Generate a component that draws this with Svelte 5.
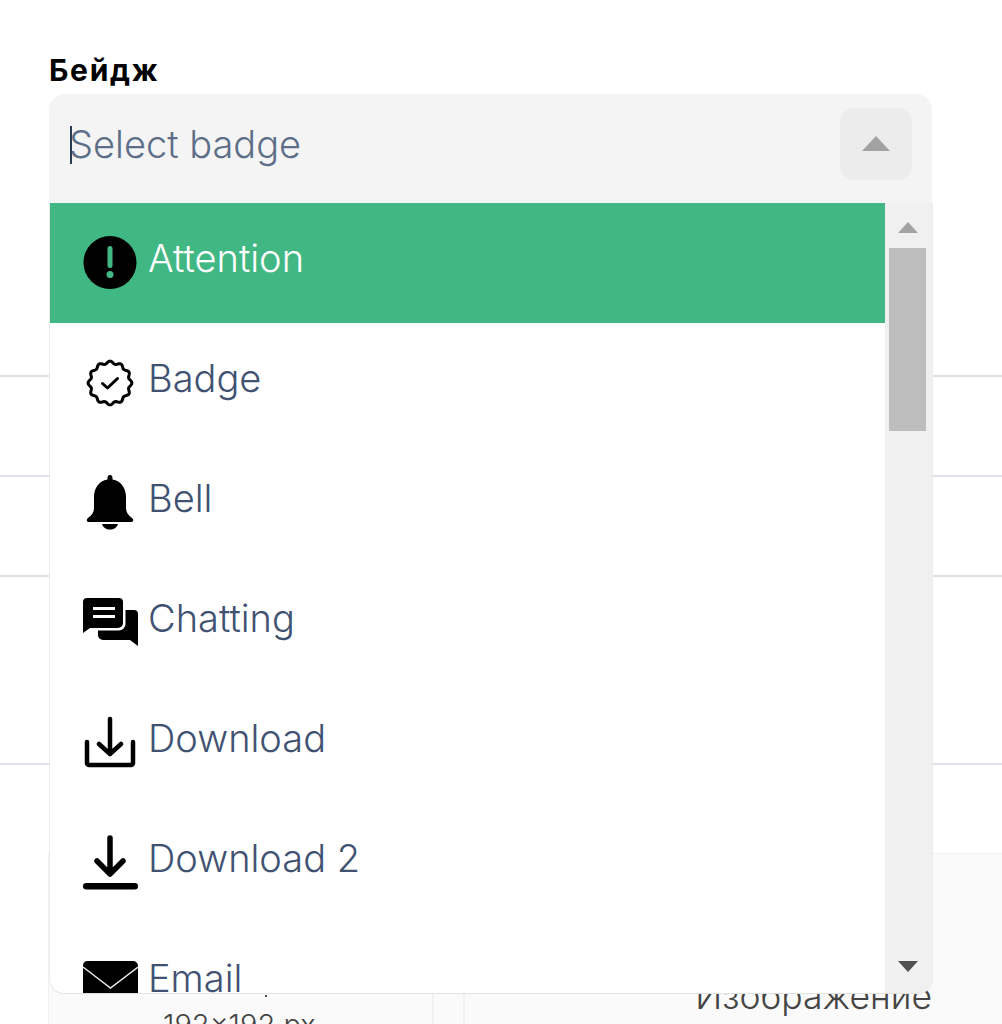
<script>
	const options = [
		{ name: 'Attention', icon: 'attention' },
		{ name: 'Badge', icon: 'badge' },
		{ name: 'Bell', icon: 'bell' },
		{ name: 'Chatting', icon: 'chatting' },
		{ name: 'Download', icon: 'download' },
		{ name: 'Download 2', icon: 'download2' },
		{ name: 'Email', icon: 'email' }
	];

	// wavy seal outline for the badge icon
	function sealPath() {
		let d = '';
		for (let i = 0; i < 144; i++) {
			const a = (i / 144) * Math.PI * 2;
			const r = 20.6 + 1.3 * Math.cos(a * 12);
			const x = (28 + r * Math.sin(a)).toFixed(2);
			const y = (28 - r * Math.cos(a)).toFixed(2);
			d += (i === 0 ? 'M' : 'L') + x + ' ' + y;
		}
		return d + 'Z';
	}
</script>

<div class="page">
	<div class="label">Бейдж</div>
	<div class="select">
		<div class="control">
			<span class="caret"></span>
			<span class="placeholder">Select badge</span>
			<span class="toggle"><span class="tri-up"></span></span>
		</div>
		<div class="menu">
			<div class="list">
				{#each options as opt, i}
					<div class="option" class:active={i === 0}>
						<span class="icon">
							<svg width="56" height="56" viewBox="0 0 56 56">
								{#if opt.icon === 'attention'}
									<circle cx="28" cy="27.500" r="26.500" fill="#000" />
									<rect x="25.500" y="11" width="5" height="22" rx="2.500" fill="#41b883" />
									<circle cx="28" cy="39.500" r="3.500" fill="#41b883" />
								{:else if opt.icon === 'badge'}
									<path d={sealPath()} fill="none" stroke="#000" stroke-width="3" stroke-linejoin="round" />
									<path d="M20.500 28.500l5 4.500 10-9.500" fill="none" stroke="#000" stroke-width="3" stroke-linecap="round" stroke-linejoin="round" />
								{:else if opt.icon === 'bell'}
									<path d="M28 0c1.500 0 2.500 1.200 2.500 3v1.500C39 6 44 13 44 22v11c0 4 2 7 6 10 2 1.500 1.500 4-1 4H7c-2.500 0-3-2.500-1-4 4-3 6-6 6-10V22c0-9 5-16 13.500-17.500V3c0-1.800 1-3 2.500-3z" fill="#000" />
									<path d="M20 49h16c-1 3.500-4 5.500-8 5.500s-7-2-8-5.500z" fill="#000" />
								{:else if opt.icon === 'chatting'}
									<path d="M5 3h32a4 4 0 0 1 4 4v21a5 5 0 0 1-5 5H8l-7 5V7a4 4 0 0 1 4-4z" fill="#000" />
									<path d="M43.500 15h8.500a4 4 0 0 1 4 4v32l-8-6H21a5 5 0 0 1-5-5v-4.500h21a6.500 6.500 0 0 0 6.500-6.500z" fill="#000" />
									<rect x="11" y="12" width="22" height="3" fill="#fff" />
									<rect x="11" y="20" width="22" height="3" fill="#fff" />
								{:else if opt.icon === 'download'}
									<path d="M5 27v21a2 2 0 0 0 2 2h42a2 2 0 0 0 2-2V27M28 4v35M17 29l11 10 11-10" fill="none" stroke="#000" stroke-width="4.500" stroke-linecap="round" stroke-linejoin="round" />
								{:else if opt.icon === 'download2'}
									<path d="M28 3v36M15 26l13 13 13-13" fill="none" stroke="#000" stroke-width="5.500" stroke-linecap="round" stroke-linejoin="round" />
									<rect x="1" y="48" width="55" height="6.500" rx="3.200" fill="#000" />
								{:else}
									<path d="M5 6h46a5 5 0 0 1 5 5v45H1V11a5 5 0 0 1 4-5z" fill="#000" />
									<path d="M1 12l27.500 21L56 12" fill="none" stroke="#e8e8e8" stroke-width="1.500" />
								{/if}
							</svg>
						</span>
						<span class="name">{opt.name}</span>
					</div>
				{/each}
			</div>
			<div class="scrollbar">
				<span class="tri-small up"></span>
				<span class="thumb"></span>
				<span class="spacer"></span>
				<span class="tri-small down"></span>
			</div>
		</div>
	</div>

	<!-- table that lies underneath the open menu -->
	<div class="table">
		<div class="row r1"></div>
		<div class="row r2"></div>
		<div class="row r3"></div>
		<div class="row r4"></div>
		<div class="row foot">
			<div class="cell left"><span class="speck"></span>192x192 px</div>
			<div class="cell right">Изображение</div>
		</div>
	</div>
</div>

<style>
	:global(body) {
		margin: 0;
		background: #fff;
	}

	.page {
		position: relative;
		width: 1002px;
		height: 1024px;
		overflow: hidden;
		font-family: Inter, 'Noto Sans', sans-serif;
	}

	.label {
		padding: 52px 0 0 49px;
		height: 42px;
		box-sizing: border-box;
		font-weight: 700;
		font-size: 30px;
		letter-spacing: 1.700px;
		line-height: 36px;
		color: #000;
	}

	.select {
		position: absolute;
		z-index: 2;
		top: 94px;
		left: 49px;
		width: 883px;
	}

	.control {
		position: relative;
		display: flex;
		align-items: center;
		justify-content: space-between;
		height: 109px;
		box-sizing: border-box;
		padding: 0 20px 10px 20px;
		background: #f4f4f4;
		border-radius: 16px 16px 0 0;
	}

	.caret {
		position: absolute;
		left: 21px;
		top: 32px;
		width: 2px;
		height: 38px;
		background: #2a3a52;
	}

	.placeholder {
		font-weight: 300;
		font-size: 38px;
		color: #5d6f88;
	}

	.toggle {
		display: flex;
		align-items: center;
		justify-content: center;
		width: 72px;
		height: 72px;
		background: #ececec;
		border-radius: 14px;
	}

	.tri-up {
		width: 0;
		height: 0;
		border-left: 14px solid transparent;
		border-right: 14px solid transparent;
		border-bottom: 15px solid #a2a2a2;
	}

	.menu {
		display: flex;
		height: 790px;
		margin-left: 1px;
		background: #fff;
		border-radius: 0 0 14px 14px;
		box-shadow: 0 1px 0 #e2e2e2, -1px 0 0 #ececec, 1px 0 0 #ececec;
		overflow: hidden;
	}

	.list {
		flex: 1;
		overflow: hidden;
	}

	.option {
		display: flex;
		align-items: center;
		gap: 10px;
		height: 120px;
		box-sizing: border-box;
		padding-left: 32px;
		font-weight: 300;
		font-size: 38px;
		color: #3f5272;
	}

	.option.active {
		background: #41b883;
		color: #fff;
	}

	.name {
		padding-bottom: 10px;
	}

	.icon {
		display: flex;
		width: 56px;
		height: 56px;
		flex: none;
	}

	.scrollbar {
		display: flex;
		flex-direction: column;
		align-items: center;
		width: 47px;
		flex: none;
		background: #f0f0f0;
		box-sizing: border-box;
		padding: 19px 2px 21px 0;
	}

	.tri-small {
		width: 0;
		height: 0;
		border-left: 10px solid transparent;
		border-right: 10px solid transparent;
	}

	.tri-small.up {
		border-bottom: 11px solid #a3a3a3;
	}

	.tri-small.down {
		border-top: 11px solid #505050;
	}

	.thumb {
		width: 37px;
		height: 183px;
		margin-top: 15px;
		background: #bdbdbd;
	}

	.spacer {
		flex: 1;
	}

	.table {
		padding-top: 224px;
	}

	.row {
		border-bottom: 2px solid #dde1ea;
		box-sizing: border-box;
	}

	.r1 { height: 101px; }
	.r2 { height: 100px; }
	.r3 { height: 100px; }
	.r4 { height: 188px; }

	.foot {
		display: flex;
		height: 172px;
		margin-top: 88px;
		margin-left: 49px;
		background: #fafafa;
		border-top: 1px solid #f0f1f4;
		border-bottom: none;
		box-shadow: -1px 0 0 #f0f1f4;
		font-weight: 300;
		line-height: 42px;
		color: #444;
		white-space: nowrap;
	}

	.cell {
		box-sizing: border-box;
		position: relative;
	}

	.left {
		width: 385px;
		margin-right: 29px;
		padding: 150px 0 0 114px;
		font-size: 29px;
		border-right: 2px solid #f0f1f4;
	}

	.speck {
		position: absolute;
		left: 216px;
		top: 141px;
		width: 2px;
		height: 2px;
		background: #555;
	}

	.right {
		flex: 1;
		padding: 122px 70px 0 0;
		font-size: 35.500px;
		text-align: right;
		border-left: 2px solid #f0f1f4;
	}
</style>
